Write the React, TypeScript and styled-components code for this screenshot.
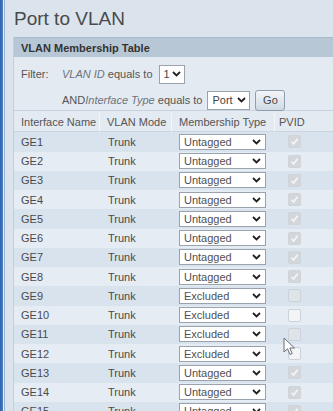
import styled, { createGlobalStyle, css } from 'styled-components'

const GlobalStyle = createGlobalStyle`
  html, body {
    margin: 0;
    padding: 0;
    background: #dbe4ed;
    font-family: "Liberation Sans", Arial, sans-serif;
    overflow: hidden;
  }
`

interface Port {
  name: string
  type: 'Untagged' | 'Excluded'
}

const ports: Port[] = Array.from({ length: 15 }, (_, i) => ({
  name: `GE${i + 1}`,
  type: i >= 8 && i <= 11 ? 'Excluded' : 'Untagged'
}))

export default function App () {
  return (
    <>
      <GlobalStyle />
      <Page>
        <SideStrip />
        <Main>
          <Title>Port to VLAN</Title>
          <Panel>
            <PanelHeader>VLAN Membership Table</PanelHeader>
            <Filter>
              <FilterLine>
                <FilterLabel>Filter:</FilterLabel>
                <span><em>VLAN ID</em> equals to</span>
                <SmallSelect $width={26}>1<Chevron /></SmallSelect>
              </FilterLine>
              <FilterLine $indent>
                <span>AND<em>Interface Type</em> equals to</span>
                <SmallSelect $width={43}>Port<Chevron /></SmallSelect>
                <GoButton>Go</GoButton>
              </FilterLine>
            </Filter>
            <Table>
              <HeadCell>Interface Name</HeadCell>
              <HeadCell>VLAN Mode</HeadCell>
              <HeadCell>Membership Type</HeadCell>
              <HeadCell $last>PVID</HeadCell>
              {ports.map((p, i) => (
                <Row key={p.name} $odd={i % 2 === 0}>
                  <Cell>{p.name}</Cell>
                  <Cell $pad={8}>Trunk</Cell>
                  <Cell>
                    <RowSelect>{p.type}<Chevron /></RowSelect>
                  </Cell>
                  <Cell $center>
                    <Check $checked={p.type === 'Untagged'} $hatched={p.name === 'GE9' || p.name === 'GE11'}>
                      {p.type === 'Untagged' && (
                        <svg width="9" height="9" viewBox="0 0 9 9">
                          <path d="M1.5 4.8 L3.6 7 L7.6 1.8" fill="none" stroke="#f4f6f8" strokeWidth="1.6" />
                        </svg>
                      )}
                    </Check>
                  </Cell>
                </Row>
              ))}
            </Table>
          </Panel>
        </Main>
        <Cursor width="14" height="20" viewBox="0 0 14 20">
          <path d="M1 1 L1 15 L4.5 11.8 L7 17.5 L9.2 16.5 L6.8 11 L11.5 11 Z" fill="#fdfdfd" stroke="#6a6f76" strokeWidth="1" />
        </Cursor>
      </Page>
    </>
  )
}

const Page = styled.div`
  position: relative;
  display: flex;
  width: 333px;
  height: 411px;
  overflow: hidden;
`

const SideStrip = styled.div`
  flex: 0 0 4px;
  background: linear-gradient(to right, #2f64ad 0, #4a7fc4 3px, #e9eff6 3px);
  border-right: 1px solid #9db4cf;
`

const Main = styled.div`
  flex: 1;
  padding-left: 8px;
  min-width: 0;
`

const Title = styled.div`
  height: 37px;
  line-height: 37px;
  font-size: 19px;
  color: #4a4a4a;
  padding-left: 1px;
`

const Panel = styled.div`
  width: 340px;
  background: #e4eaf1;
  border-left: 1px solid #c3cfdb;
`

const PanelHeader = styled.div`
  height: 20px;
  line-height: 20px;
  padding-left: 7px;
  background: #b8c7d5;
  border-top: 1px solid #a9bacb;
  font-size: 11px;
  font-weight: bold;
  color: #333;
  box-sizing: border-box;
`

const Filter = styled.div`
  height: 54px;
  padding: 6px 0 0 7px;
  box-sizing: border-box;
  font-size: 11px;
  color: #555;
  border-bottom: 1px solid #c8d3de;
  white-space: nowrap;

  em {
    color: #6b7480;
  }
`

const FilterLine = styled.div<{ $indent?: boolean }>`
  display: flex;
  align-items: center;
  gap: ${p => p.$indent ? '5px' : '6px'};
  height: 22px;
  margin-bottom: 4px;
  padding-left: ${p => p.$indent ? '41px' : '0'};
`

const FilterLabel = styled.span`
  width: 35px;
`

const selectBox = css`
  display: flex;
  align-items: center;
  justify-content: space-between;
  box-sizing: border-box;
  background: #fff;
  border: 1px solid #9aa3ad;
  color: #444;
  font-size: 11px;
`

const SmallSelect = styled.div<{ $width: number }>`
  ${selectBox}
  width: ${p => p.$width}px;
  height: 19px;
  padding: 0 3px 0 4px;
`

const GoButton = styled.div`
  width: 30px;
  height: 21px;
  line-height: 19px;
  box-sizing: border-box;
  text-align: center;
  border: 1px solid #8f9eae;
  border-radius: 3px;
  background: linear-gradient(#f3f6f9, #cfd9e3);
  color: #444;
  font-size: 11px;
`

const Chevron = () => (
  <svg width="9" height="6" viewBox="0 0 9 6">
    <path d="M1 1 L4.5 4.5 L8 1" fill="none" stroke="#222" strokeWidth="1.8" />
  </svg>
)

const Table = styled.div`
  display: grid;
  grid-template-columns: 86px 72px 103px 1fr;
  grid-auto-rows: 19.25px;
  font-size: 11px;
  color: #4a4a4a;
  padding-top: 2px;
  white-space: nowrap;
`

const HeadCell = styled.div<{ $last?: boolean }>`
  display: flex;
  align-items: center;
  padding-left: ${p => p.$last ? '4px' : '7px'};
  color: #555;
  border-right: ${p => p.$last ? 'none' : '1px solid #f4f7fa'};
  border-bottom: 1px solid #c9d4df;
`

const Row = styled.div<{ $odd: boolean }>`
  display: contents;

  & > div {
    background: ${p => p.$odd ? '#d8e3ee' : '#e6ecf3'};
  }
`

const Cell = styled.div<{ $pad?: number, $center?: boolean }>`
  display: flex;
  align-items: center;
  padding-left: ${p => p.$center ? '13px' : `${p.$pad ?? 7}px`};
`

const RowSelect = styled.div`
  ${selectBox}
  width: 87px;
  height: 16px;
  padding: 0 4px 0 4px;
  color: #505050;
`

const Check = styled.div<{ $checked: boolean, $hatched: boolean }>`
  display: flex;
  align-items: center;
  justify-content: center;
  width: 11px;
  height: 11px;
  border-radius: 2px;
  background: ${p => p.$checked ? '#d3d7db' : p.$hatched ? '#dfe4e9' : '#f2f4f6'};
  border: 1px solid ${p => p.$checked ? '#cfd4d9' : '#cbd2d9'};
`

const Cursor = styled.svg`
  position: absolute;
  left: 283px;
  top: 337px;
`
